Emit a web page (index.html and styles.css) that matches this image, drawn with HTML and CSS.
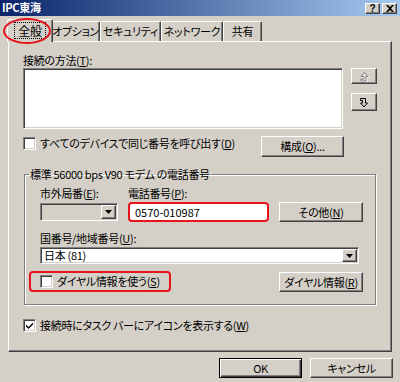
FILE: index.html
```html
<!DOCTYPE html>
<html lang="ja">
<head>
    <meta charset="UTF-8">
    <meta name="viewport" content="width=device-width, initial-scale=1.0">
    <title>IPC東海</title>
    <link rel="stylesheet" href="styles.css">
</head>
<body>
    <div class="window">
        <div class="titlebar">
            <span class="title">IPC東海</span>
            <div class="caption-btns">
                <span class="cap-btn">?</span>
                <span class="cap-btn">
                    <svg width="8" height="7" viewBox="0 0 8 7"><path d="M0 0h2l2 2 2-2h2L5 3.5 8 7H6L4 5 2 7H0l3-3.5z" fill="#000"/></svg>
                </span>
            </div>
        </div>

        <div class="tabs">
            <div class="tab active">
                <span class="focus">全般</span>
                <span class="mark-circle"></span>
            </div>
            <div class="tab w-option">オプション</div>
            <div class="tab w-security">セキュリティ</div>
            <div class="tab w-network">ネットワーク</div>
            <div class="tab w-share">共有</div>
        </div>

        <div class="panel">
            <div class="label">接続の方法(<u>T</u>):</div>
            <div class="device-row">
                <div class="listbox"></div>
                <div class="order-btns">
                    <div class="btn up-btn">
                        <svg width="10" height="11" viewBox="0 0 10 11">
                            <path d="M5.5 1.5l3.5 4h-2v4.5h-5v-2h3v-2.5h-3z" fill="none" stroke="#fff" transform="translate(1 1)"/>
                            <path d="M5.5 1.5l3.5 4h-2v4.5h-5v-2h3v-2.5h-3z" fill="none" stroke="#808080"/>
                        </svg>
                    </div>
                    <div class="btn down-btn">
                        <svg width="10" height="11" viewBox="0 0 10 11">
                            <path d="M1.5 1.5h5v4.5h2l-3.5 4-3.5-4h2v-2.5h-2z" fill="none" stroke="#000"/>
                        </svg>
                    </div>
                </div>
            </div>
            <div class="check-row">
                <div class="check">
                    <span class="box"></span>
                    <span>すべてのデバイスで同じ番号を呼び出す(<u>D</u>)</span>
                </div>
                <div class="btn config-btn">構成(<u>O</u>)...</div>
            </div>

            <fieldset class="group">
                <legend>標準 56000 bps V90 モデム の電話番号</legend>
                <div class="group-body">
                    <div class="label-row">
                        <span class="area-label">市外局番(<u>E</u>):</span>
                        <span>電話番号(<u>P</u>):</span>
                    </div>
                    <div class="number-row">
                        <div class="combo disabled">
                            <span class="drop-btn"><svg width="7" height="4" viewBox="0 0 7 4"><path d="M0 0h7L3.5 4z" fill="#000"/></svg></span>
                        </div>
                        <div class="phone marked">0570-010987</div>
                        <div class="btn side-btn">その他(<u>N</u>)</div>
                    </div>
                    <div class="label country-label">国番号/地域番号(<u>U</u>):</div>
                    <div class="combo country">
                        <span class="combo-text">日本 (81)</span>
                        <span class="drop-btn"><svg width="7" height="4" viewBox="0 0 7 4"><path d="M0 0h7L3.5 4z" fill="#000"/></svg></span>
                    </div>
                    <div class="dial-row">
                        <div class="check marked dial-check">
                            <span class="box"></span>
                            <span>ダイヤル情報を使う(<u>S</u>)</span>
                        </div>
                        <div class="btn side-btn dial-btn">ダイヤル情報(<u>R</u>)</div>
                    </div>
                </div>
            </fieldset>

            <div class="check taskbar">
                <span class="box">
                    <svg width="7" height="7" viewBox="0 0 7 7"><path d="M0 2.5l2.5 2.5L7 0.5v2L2.5 7 0 4.5z" fill="#000"/></svg>
                </span>
                <span>接続時にタスク バーにアイコンを表示する(<u>W</u>)</span>
            </div>
        </div>

        <div class="dialog-btns">
            <div class="btn default-btn">OK</div>
            <div class="btn">キャンセル</div>
        </div>
    </div>
</body>
</html>
```

FILE: styles.css
```css
* {
    box-sizing: border-box;
}
body {
    margin: 0;
    background-color: #d4d0c8;
    font-family: "Noto Sans CJK JP", "Liberation Sans", sans-serif;
    font-size: 11px;
    line-height: 13px;
    letter-spacing: -0.3px;
    font-feature-settings: "palt";
    color: #000;
}
u {
    text-decoration-thickness: 1px;
    text-underline-offset: 1px;
}
.window {
    width: 400px;
    height: 382px;
    background-color: #d4d0c8;
    overflow: hidden;
}

/* title bar */
.titlebar {
    height: 16px;
    display: flex;
    align-items: center;
    justify-content: space-between;
    padding: 0 3px 0 2px;
    background: linear-gradient(to right, #0a246a, #a6caf0);
}
.title {
    color: #fff;
    font-size: 11px;
    font-weight: bold;
    line-height: 14px;
    margin-top: -2px;
}
.caption-btns {
    display: flex;
    gap: 2px;
}
.cap-btn {
    width: 15px;
    height: 11px;
    display: flex;
    align-items: center;
    justify-content: center;
    background-color: #d4d0c8;
    border: 1px solid;
    border-color: #fff #404040 #404040 #fff;
    box-shadow: inset -1px -1px #808080;
    font-family: "Liberation Sans", sans-serif;
    font-size: 10px;
    font-weight: bold;
    line-height: 9px;
}

/* tabs */
.tabs {
    display: flex;
    align-items: flex-end;
    height: 25px;
    padding-left: 9px;
}
.tab {
    width: 42px;
    height: 20px;
    display: flex;
    align-items: center;
    justify-content: center;
    border: 1px solid;
    border-bottom: none;
    border-color: #fff #404040 transparent #fff;
    border-radius: 2px 2px 0 0;
    box-shadow: inset -1px 0 #808080;
    white-space: nowrap;
}
.w-option { width: 49px; }
.w-security { width: 61px; }
.w-network { width: 62px; }
.w-share { width: 39px; }
.tab.active {
    position: relative;
    z-index: 1;
    width: 46px;
    height: 23px;
    margin: 0 -2px -1px -2px;
    background-color: #d4d0c8;
    padding-bottom: 2px;
}
.focus {
    outline: 1px dotted #000;
    outline-offset: 1px;
    padding: 0 2px;
    font-size: 12px;
}
.mark-circle {
    position: absolute;
    left: -5px;
    top: -2px;
    width: 48px;
    height: 26px;
    border: 2px solid #e8141c;
    border-radius: 50%;
}

/* main panel */
.panel {
    width: 384px;
    height: 311px;
    margin-left: 8px;
    padding: 12px 0 0 14px;
    border: 1px solid;
    border-color: #fff #404040 #404040 #fff;
    box-shadow: inset -1px -1px #808080;
}
.label {
    height: 13px;
    white-space: nowrap;
}
.device-row {
    display: flex;
    margin-top: 1px;
}
.listbox,
.combo,
.phone,
.box {
    background-color: #fff;
    border: 1px solid;
    border-color: #808080 #fff #fff #808080;
    box-shadow: inset 1px 1px #404040, inset -1px -1px #d4d0c8;
}
.listbox {
    width: 320px;
    height: 61px;
}
.order-btns {
    display: flex;
    flex-direction: column;
    margin-left: 8px;
}
.btn {
    display: flex;
    align-items: center;
    justify-content: center;
    background-color: #d4d0c8;
    border: 1px solid;
    border-color: #fff #404040 #404040 #fff;
    box-shadow: inset -1px -1px #808080;
    white-space: nowrap;
}
.up-btn {
    width: 26px;
    height: 16px;
}
.down-btn {
    width: 26px;
    height: 18px;
    margin-top: 9px;
}
.check-row {
    display: flex;
    justify-content: space-between;
    align-items: flex-start;
    width: 321px;
    margin-top: 7px;
}
.check {
    display: flex;
    align-items: center;
    gap: 4px;
    white-space: nowrap;
}
.check-row .check {
    margin-top: 1px;
}
.box {
    width: 13px;
    height: 13px;
    flex: none;
    display: flex;
    align-items: center;
    justify-content: center;
}
.config-btn {
    width: 83px;
    height: 21px;
}

/* phone number group */
.group {
    width: 352px;
    margin: 11px 0 0 1px;
    padding: 0;
    border: 1px solid #808080;
    box-shadow: inset 1px 1px #fff, 1px 1px #fff;
    min-width: 0;
}
.group legend {
    margin-left: 4px;
    padding: 0 1px;
    line-height: 13px;
    white-space: nowrap;
}
.group-body {
    padding: 6px 0 12px 15px;
}
.label-row {
    display: flex;
    height: 13px;
    white-space: nowrap;
}
.area-label {
    width: 88px;
}
.number-row {
    display: flex;
    align-items: flex-start;
    margin-top: 2px;
}
.combo {
    position: relative;
    display: flex;
    align-items: center;
}
.combo.disabled {
    width: 78px;
    height: 18px;
    margin-top: 1px;
    background-color: #d4d0c8;
}
.drop-btn {
    position: absolute;
    right: 1px;
    top: 1px;
    bottom: 1px;
    width: 15px;
    display: flex;
    align-items: center;
    justify-content: center;
    background-color: #d4d0c8;
    border: 1px solid;
    border-color: #fff #404040 #404040 #fff;
    box-shadow: inset -1px -1px #808080;
}
.phone {
    width: 141px;
    height: 20px;
    margin-left: 10px;
    padding-left: 5px;
    display: flex;
    align-items: center;
    letter-spacing: 0;
}
.marked {
    border: 2px solid #e8141c;
    border-radius: 4px;
    box-shadow: none;
}
.side-btn {
    width: 84px;
    height: 20px;
    margin-left: 10px;
}
.country-label {
    margin-top: 10px;
}
.combo.country {
    width: 319px;
    height: 17px;
    margin-top: 2px;
    padding-left: 3px;
}
.dial-row {
    display: flex;
    align-items: flex-start;
    margin-top: 7px;
}
.dial-check {
    width: 142px;
    height: 21px;
    margin-left: -11px;
    padding-left: 9px;
    background-color: transparent;
}
.dial-btn {
    margin-left: 108px;
    margin-top: 1px;
}
.taskbar {
    margin-top: 14px;
}

/* bottom buttons */
.dialog-btns {
    display: flex;
    justify-content: flex-end;
    gap: 8px;
    margin-top: 6px;
    padding-right: 7px;
}
.dialog-btns .btn {
    width: 83px;
    height: 20px;
}
.dialog-btns .default-btn {
    border: 1px solid #000;
    box-shadow: inset 1px 1px #fff, inset -1px -1px #404040, inset -2px -2px #808080;
}
```
